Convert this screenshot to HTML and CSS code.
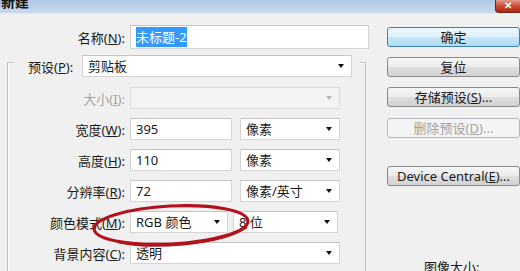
FILE: index.html
```html
<!DOCTYPE html>
<html lang="zh-CN">
<head>
    <meta charset="UTF-8">
    <title>新建</title>
    <link rel="stylesheet" href="styles.css">
</head>
<body>

<div id="window">
    <!-- title bar, cut off at the top -->
    <div class="titlebar">
        <span class="title">新建</span>
        <span class="close">✕</span>
    </div>

    <div class="dialog">
        <div class="main">
            <div class="row name-row">
                <label>名称(<u>N</u>):</label>
                <div class="field name-field"><span class="selected">未标题-2</span></div>
            </div>

            <div class="group">
                <div class="preset">
                    <label>预设(<u>P</u>):</label>
                    <div class="field select preset-select">剪贴板<i class="arrow"></i></div>
                </div>

                <div class="row first">
                    <label class="disabled">大小(<u>I</u>):</label>
                    <div class="field select full off"><i class="arrow"></i></div>
                </div>
                <div class="row">
                    <label>宽度(<u>W</u>):</label>
                    <div class="field num">395</div>
                    <div class="field select unit">像素<i class="arrow"></i></div>
                </div>
                <div class="row">
                    <label>高度(<u>H</u>):</label>
                    <div class="field num">110</div>
                    <div class="field select unit">像素<i class="arrow"></i></div>
                </div>
                <div class="row">
                    <label>分辨率(<u>R</u>):</label>
                    <div class="field num">72</div>
                    <div class="field select unit">像素/英寸<i class="arrow"></i></div>
                </div>
                <div class="row">
                    <label>颜色模式(<u>M</u>):</label>
                    <div class="field select mode">RGB 颜色<i class="arrow"></i></div>
                    <div class="field select unit">8 位<i class="arrow"></i></div>
                </div>
                <div class="row">
                    <label>背景内容(<u>C</u>):</label>
                    <div class="field select full">透明<i class="arrow"></i></div>
                </div>
            </div>
        </div>

        <div class="side">
            <div class="btn default">确定</div>
            <div class="btn">复位</div>
            <div class="btn">存储预设(<u>S</u>)...</div>
            <div class="btn off">删除预设(<u>D</u>)...</div>
            <div class="btn device">Device Central(<u>E</u>)...</div>
            <div class="info">图像大小:</div>
        </div>
    </div>

    <!-- red marker drawn over the colour mode row -->
    <svg class="mark" width="520" height="271" viewBox="0 0 520 271">
        <ellipse cx="171" cy="225" rx="77" ry="19" transform="rotate(-3 171 225)" fill="none" stroke="#b3121c" stroke-width="3.2"/>
        <path d="M118 242 C150 249 218 246 247 227" fill="none" stroke="#b3121c" stroke-width="2.4"/>
    </svg>
</div>

</body>
</html>
```

FILE: styles.css
```css
html, body {
    margin: 0;
    padding: 0;
    overflow: hidden;
}
body {
    font-family: "Noto Sans", "Noto Sans CJK SC", sans-serif;
    font-size: 13px;
    color: #1a1a1a;
    background-color: #f0f0f0;
}
#window {
    position: relative;
    width: 520px;
    height: 271px;
    overflow: hidden;
}
.titlebar {
    display: flex;
    height: 13px;
    background: linear-gradient(#aec7e3, #c8daee);
    border-bottom: 1px solid #dfe9f4;
    overflow: hidden;
}
.title {
    margin-top: -8px;
    padding-left: 1px;
    font-size: 14px;
    line-height: 20px;
    color: #111;
    font-weight: bold;
}
.close {
    margin-left: auto;
    width: 24px;
    height: 12px;
    background: linear-gradient(#e09a8c, #c9432f 55%, #b02a12);
    border: 1px solid #6d2a1e;
    border-top: none;
    border-right: none;
    border-radius: 0 0 0 4px;
    color: #fff;
    font-size: 10px;
    line-height: 11px;
    text-align: center;
    font-weight: bold;
}
.dialog {
    display: flex;
}
.main {
    width: 370px;
}
.row {
    display: flex;
    align-items: center;
    height: 22px;
    margin-top: 9px;
}
.row label {
    width: 117px;
    margin-right: 5px;
    text-align: right;
    white-space: nowrap;
}
.row label.disabled {
    color: #a4a4a4;
}
.name-row {
    height: 24px;
    margin-top: 11px;
}
.name-row label {
    width: 125px;
}
.field {
    position: relative;
    box-sizing: border-box;
    height: 100%;
    background-color: #fff;
    border: 1px solid #d4d4d4;
    border-top-color: #c4c4c4;
    padding-left: 5px;
    line-height: 20px;
    white-space: nowrap;
}
.name-field {
    width: 239px;
    line-height: 22px;
}
.selected {
    background-color: #3399ff;
    color: #fff;
    padding: 1px 0;
}
.group {
    margin-left: 7px;
    margin-top: 13px;
    width: 359px;
    height: 230px;
    box-sizing: border-box;
    border: 1px solid #c2c2c2;
    border-bottom: none;
    box-shadow: inset 1px 1px #fff;
}
.preset {
    display: flex;
    align-items: center;
    height: 22px;
    margin: -8px 0 0 6px;
    width: 346px;
    box-sizing: border-box;
    padding: 0 8px 0 14px;
    background-color: #f0f0f0;
}
.preset label {
    width: 54px;
}
.preset-select {
    flex: 1;
}
.row.first {
    margin-top: 10px;
}
.num {
    width: 102px;
}
.unit {
    width: 100px;
    margin-left: 8px;
}
.mode {
    width: 98px;
}
.mode + .unit {
    margin-left: 5px;
    width: 105px;
}
.full {
    width: 210px;
}
.select.off {
    background-color: #f3f3f3;
    border-color: #dadada;
}
.arrow {
    position: absolute;
    right: 7px;
    top: 8px;
    width: 0;
    height: 0;
    border-left: 3.5px solid transparent;
    border-right: 3.5px solid transparent;
    border-top: 4px solid #111;
}
.off .arrow {
    border-top-color: #b8b8b8;
}
.side {
    margin-left: 18px;
    width: 134px;
}
.btn {
    box-sizing: border-box;
    height: 20px;
    margin-top: 10px;
    border: 1px solid #8a8a8a;
    border-radius: 3px;
    background: linear-gradient(#f6f6f6, #ececec 50%, #dedede 51%, #d2d2d2);
    text-align: center;
    line-height: 18px;
    white-space: nowrap;
}
.btn.default {
    margin-top: 13px;
    border-color: #3c7fb1;
    background: linear-gradient(#eef7fd, #dcf0fb 50%, #c4e6f8 51%, #b4dcf2);
}
.btn.off {
    margin-top: 11px;
    border-color: #b5b9bc;
    background: #f4f4f4;
    color: #a3a3a3;
}
.btn.device {
    margin-top: 28px;
}
.info {
    margin-top: 71px;
    padding-left: 37px;
}
.mark {
    position: absolute;
    left: 0;
    top: 0;
    pointer-events: none;
}
```
